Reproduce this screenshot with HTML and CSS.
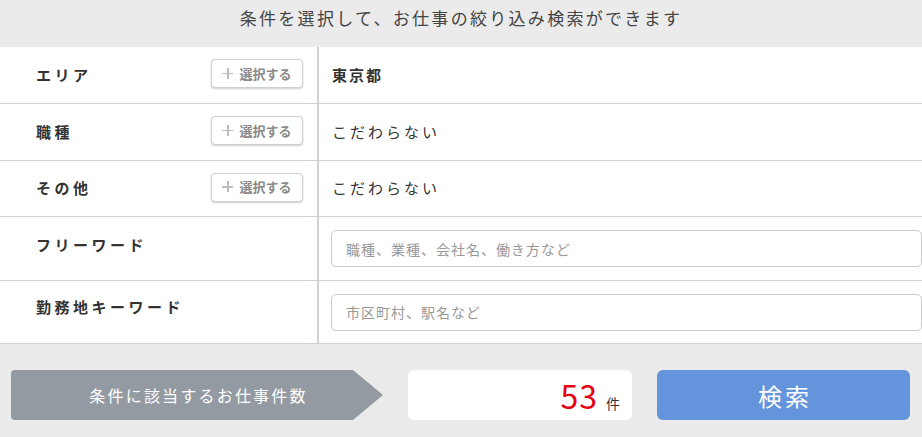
FILE: index.html
```html
<!DOCTYPE html>
<html lang="ja">
<head>
<meta charset="utf-8">
<link rel="stylesheet" href="styles.css">
</head>
<body>
<div class="page">
  <div class="lead">条件を選択して、お仕事の絞り込み検索ができます</div>
  <div class="table">
    <div class="row row-sel">
      <div class="cell-label"><span class="label">エリア</span><button class="sel"><span class="plus"></span>選択する</button></div>
      <div class="cell-value"><span class="value bold">東京都</span></div>
    </div>
    <div class="row row-sel">
      <div class="cell-label"><span class="label">職種</span><button class="sel"><span class="plus"></span>選択する</button></div>
      <div class="cell-value"><span class="value">こだわらない</span></div>
    </div>
    <div class="row row-sel">
      <div class="cell-label"><span class="label">その他</span><button class="sel"><span class="plus"></span>選択する</button></div>
      <div class="cell-value"><span class="value">こだわらない</span></div>
    </div>
    <div class="row row-input">
      <div class="cell-label top"><span class="label">フリーワード</span></div>
      <div class="cell-value"><input class="field" type="text" placeholder="職種、業種、会社名、働き方など"></div>
    </div>
    <div class="row row-input">
      <div class="cell-label top"><span class="label">勤務地キーワード</span></div>
      <div class="cell-value"><input class="field" type="text" placeholder="市区町村、駅名など"></div>
    </div>
  </div>
  <div class="footer">
    <div class="count-label">条件に該当するお仕事件数</div>
    <div class="count-box"><span class="num">53</span><span class="unit">件</span></div>
    <button class="search">検索</button>
  </div>
</div>
</body>
</html>
```
FILE: styles.css
```css
* { box-sizing: border-box; }
html, body { margin: 0; padding: 0; }
body {
  font-family: "Noto Sans CJK JP", "Noto Sans", sans-serif;
  color: #333;
  background: #fff;
  width: 922px;
  height: 437px;
  overflow: hidden;
}
.page { width: 922px; }
.lead {
  height: 47px;
  background: #ebebeb;
  color: #444;
  font-size: 17px;
  letter-spacing: 2.3px;
  text-align: center;
  line-height: 36px;
}
.table { background: #fff; }
.row {
  display: flex;
  border-bottom: 1px solid #d4cfcc;
}
.row-sel { height: 57px; }
.row-sel:nth-child(3) { height: 56px; }
.row-input { height: 64px; }
.row:last-child { height: 63px; }
.cell-label {
  width: 319px;
  border-right: 2px solid #d4cfcc;
  display: flex;
  align-items: center;
  justify-content: space-between;
  padding: 0 14px 2px 36px;
}
.cell-label.top { align-items: flex-start; padding-top: 17px; }
.row:last-child .cell-label.top { padding-top: 15px; }
.label {
  font-size: 15px;
  font-weight: bold;
  letter-spacing: 3.5px;
  color: #333;
}
.sel {
  width: 92px;
  height: 29px;
  margin-top: -1px;
  background: #fff;
  border: 1px solid #d0d0d0;
  border-radius: 4px;
  box-shadow: 0 1px 2px rgba(0,0,0,0.2);
  font-family: inherit;
  font-size: 13px;
  font-weight: bold;
  color: #8a8a8a;
  padding: 0 0 1px;
  display: flex;
  align-items: center;
  justify-content: center;
}
.plus {
  position: relative;
  width: 11px;
  height: 11px;
  margin-right: 6px;
}
.plus::before, .plus::after {
  content: "";
  position: absolute;
  background: #bdbdbd;
}
.plus::before { left: 0; right: 0; top: 5px; height: 1.5px; }
.plus::after { top: 0; bottom: 0; left: 5px; width: 1.5px; }
.cell-value {
  flex: 1;
  display: flex;
  align-items: center;
  padding: 0 0 2px 13px;
}
.row-input .cell-value { padding: 0 0 0 12px; }
.value {
  font-size: 15px;
  letter-spacing: 3px;
  color: #333;
}
.value.bold { font-weight: bold; letter-spacing: 2px; }
.field {
  width: 591px;
  height: 37px;
  border: 1px solid #ccc;
  border-radius: 5px;
  padding: 0 14px;
  font-family: inherit;
  font-size: 14px;
  letter-spacing: 1px;
  color: #333;
}
.field::placeholder { color: #999; }
.footer {
  height: 94px;
  background: #ebebeb;
  display: flex;
  align-items: flex-start;
  gap: 25px;
  padding: 26px 12px 0 11px;
}
.count-label {
  width: 372px;
  height: 50px;
  background: #939aa2;
  color: #fff;
  font-size: 16px;
  letter-spacing: 2.2px;
  display: flex;
  align-items: center;
  justify-content: center;
  padding-left: 3px;
  border-radius: 4px 0 0 4px;
  clip-path: polygon(0 0, calc(100% - 30px) 0, 100% 50%, calc(100% - 30px) 100%, 0 100%);
}
.count-box {
  width: 224px;
  height: 50px;
  background: #fff;
  border-radius: 6px;
  display: flex;
  align-items: baseline;
  justify-content: flex-end;
  padding: 0 12px 0 0;
}
.num {
  color: #e60012;
  font-size: 32px;
  letter-spacing: 1px;
  line-height: 50px;
}
.unit {
  font-size: 14px;
  color: #333;
  margin-left: 8px;
}
.search {
  width: 253px;
  height: 50px;
  background: #6495dc;
  border: none;
  border-radius: 6px;
  color: #fff;
  font-family: inherit;
  font-size: 24px;
  letter-spacing: 3px;
  padding: 0 0 0 3px;
}
```
